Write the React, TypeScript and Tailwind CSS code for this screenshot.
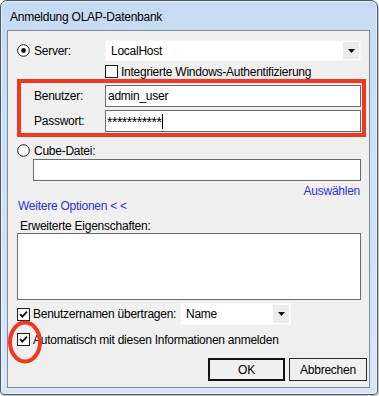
import React from "react";

const font = { fontFamily: '"Liberation Sans", Arial, sans-serif' };

function Radio({ checked }: { checked?: boolean }) {
  return (
    <svg width="13" height="13" viewBox="0 0 13 13" className="shrink-0">
      <circle cx="6.5" cy="6.5" r="5.8" fill="#fff" stroke="#1e1e1e" strokeWidth="1" />
      {checked && <circle cx="6.5" cy="6.5" r="2.4" fill="#111" />}
    </svg>
  );
}

function Check({ checked }: { checked?: boolean }) {
  return (
    <svg width="13" height="13" viewBox="0 0 13 13" className="shrink-0">
      <rect x="0.5" y="0.5" width="12" height="12" fill="#fff" stroke="#1e1e1e" />
      {checked && <path d="M3 6.2 L5.3 8.6 L10 3.6" fill="none" stroke="#111" strokeWidth="1.8" />}
    </svg>
  );
}

function Combo({ value, className }: { value: string; className: string }) {
  return (
    <div className={`flex items-center bg-white border border-[#f7f7f7] p-px ${className}`}>
      <span className="flex-1 pl-[4px] text-[12px] text-black leading-none">{value}</span>
      <div className="w-[16px] h-full bg-[#ececec] flex items-center justify-center">
        <svg width="7" height="4" viewBox="0 0 7 4">
          <path d="M0 0 H7 L3.5 4 Z" fill="#111" />
        </svg>
      </div>
    </div>
  );
}

export default function App() {
  return (
    <div className="w-[379px] h-[396px] bg-white text-[12px] tracking-[-0.25px] text-black whitespace-nowrap" style={font}>
      <div className="relative w-[378px] h-[395px] rounded-t-[7px] rounded-b-[4px] border border-[#4a5869] bg-gradient-to-b from-[#c6dbf3] to-[#d8e7f8] shadow-[inset_0_0_0_1px_rgba(255,255,255,0.55),1px_1px_2px_rgba(0,0,0,0.3)] flex flex-col pl-[6px] pr-[7px] pb-[6px]">
        <div className="h-[29px] flex items-center pl-[3px] pt-[2px] text-[12px] text-black">
          Anmeldung OLAP-Datenbank
        </div>

        <div className="flex-1 border border-[#7c8ca0] bg-[#f0f0f0] flex flex-col">
          {/* Server */}
          <div className="mt-[9px] h-[21px] flex items-center pl-[9px]">
            <div className="w-[88px] flex items-center gap-[4px]">
              <Radio checked />
              <span>Server:</span>
            </div>
            <Combo value="LocalHost" className="w-[256px] h-[21px]" />
          </div>

          <div className="mt-[3px] h-[15px] flex items-center gap-[3px] pl-[97px]">
            <Check />
            <span>Integrierte Windows-Authentifizierung</span>
          </div>

          {/* Benutzer / Passwort */}
          <div className="ml-[9px] w-[349px] h-[58px] border-4 border-[#f2391f] flex flex-col pt-[2px] gap-[3px]">
            <div className="flex items-center h-[22px] pl-[13px]">
              <span className="w-[71px]">Benutzer:</span>
              <div className="w-[256px] h-[22px] bg-white border border-[#6b6b6b] flex items-center pl-[2px]">
                admin_user
              </div>
            </div>
            <div className="flex items-center h-[22px] pl-[13px]">
              <span className="w-[71px]">Passwort:</span>
              <div className="w-[256px] h-[22px] bg-white border border-[#6b6b6b] flex items-center pl-[1px]">
                <span className="tracking-[-0.5px] text-[14px] pt-[2px]">***********</span>
                <span className="w-px h-[15px] bg-black ml-[1px]" />
              </div>
            </div>
          </div>

          {/* Cube */}
          <div className="mt-[6px] h-[15px] flex items-center gap-[4px] pl-[9px]">
            <Radio />
            <span>Cube-Datei:</span>
          </div>
          <div className="mt-[1px] ml-[25px] w-[328px] h-[22px] bg-white border border-[#6b6b6b]" />
          <div className="mt-[2px] h-[15px] flex items-center justify-end pr-[9px] text-[#2b30e6]">
            Auswählen
          </div>

          <div className="h-[15px] flex items-center pl-[10px] text-[#2b30e6]">Weitere Optionen &lt; &lt;</div>

          <div className="mt-[5px] h-[15px] flex items-center pl-[12px]">Erweiterte Eigenschaften:</div>
          <div className="ml-[9px] w-[344px] h-[67px] bg-white border border-[#6b6b6b]" />

          <div className="mt-[3px] h-[22px] flex items-center pl-[9px]">
            <div className="w-[163px] flex items-center gap-[3px]">
              <Check checked />
              <span>Benutzernamen übertragen:</span>
            </div>
            <Combo value="Name" className="w-[111px] h-[22px]" />
          </div>

          <div className="mt-[7px] h-[15px] flex items-center gap-[3px] pl-[9px]">
            <Check checked />
            <span>Automatisch mit diesen Informationen anmelden</span>
          </div>

          <div className="mt-[11px] flex justify-end gap-[4px] pr-[2px]">
            <button className="w-[77px] h-[23px] border-2 border-[#111] bg-[#f0f0f0] flex items-center justify-center">
              OK
            </button>
            <button className="w-[78px] h-[23px] border border-[#2a2a2a] bg-[#f0f0f0] flex items-center justify-center">
              Abbrechen
            </button>
          </div>
        </div>

        {/* red annotation ellipse */}
        <svg
          className="absolute left-[6px] top-[319px] pointer-events-none"
          width="36"
          height="44"
          viewBox="0 0 36 44"
        >
          <ellipse cx="18" cy="22" rx="15" ry="19.5" fill="none" stroke="#f2391f" strokeWidth="4" />
        </svg>
      </div>
    </div>
  );
}
